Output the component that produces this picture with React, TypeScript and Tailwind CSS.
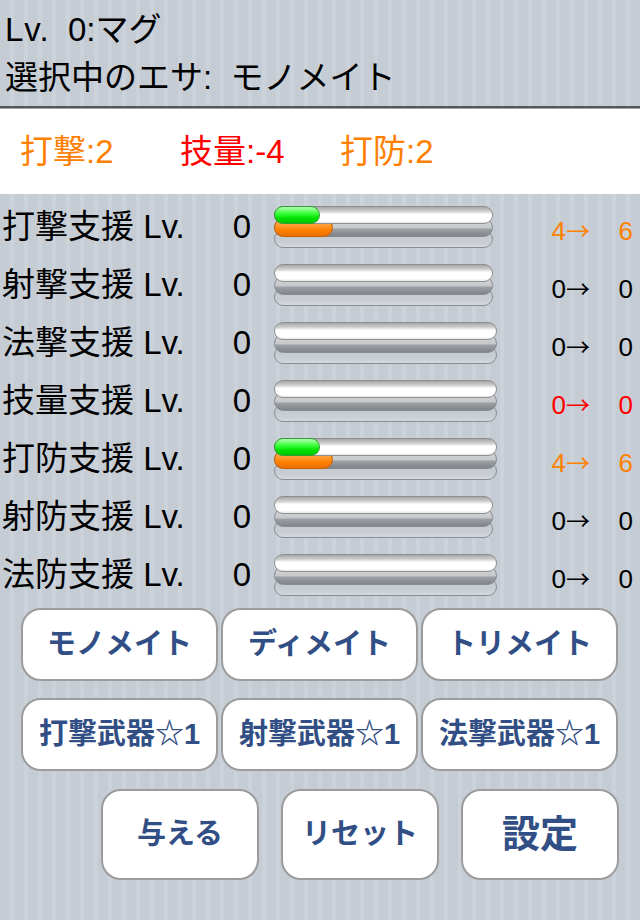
import React from 'react';

type Row = {
  label: string;
  from: number;
  to: number;
  tone: 'orange' | 'red' | 'black';
  fill: boolean;
  wide: boolean;
};

const ROWS: Row[] = [
  { label: '打撃支援', from: 4, to: 6, tone: 'orange', fill: true, wide: false },
  { label: '射撃支援', from: 0, to: 0, tone: 'black', fill: false, wide: false },
  { label: '法撃支援', from: 0, to: 0, tone: 'black', fill: false, wide: true },
  { label: '技量支援', from: 0, to: 0, tone: 'red', fill: false, wide: true },
  { label: '打防支援', from: 4, to: 6, tone: 'orange', fill: true, wide: true },
  { label: '射防支援', from: 0, to: 0, tone: 'black', fill: false, wide: false },
  { label: '法防支援', from: 0, to: 0, tone: 'black', fill: false, wide: true },
];

const TONE: Record<Row['tone'], string> = {
  orange: 'text-[#ff8000]',
  red: 'text-[#ff0000]',
  black: 'text-black',
};

// three stacked pill tracks, like the old iOS progress views
function StackBar({ fill, wide }: { fill: boolean; wide: boolean }) {
  return (
    <div className={`relative h-[42px] ${wide ? 'w-[223px]' : 'w-[219px]'}`}>
      {/* bottom track */}
      <div className="absolute left-0 right-0 top-[24px] h-[18px] rounded-full border border-[#8a8f95] bg-[linear-gradient(to_bottom,#c3c8ce_0%,#c9ced4_70%,#d4d8dd_100%)]" />
      {/* middle track */}
      <div className="absolute left-0 right-0 top-[12px] h-[19px] rounded-full border border-[#878b90] bg-[linear-gradient(to_bottom,#d8d8d8_0%,#c6c9cc_50%,#9a9ea2_62%,#80858a_100%)]" />
      {fill && (
        <div className="absolute left-0 top-[12px] h-[19px] w-[59px] rounded-full border border-[#c65f00] bg-[linear-gradient(to_bottom,#ffb565_0%,#ff9424_45%,#ff8000_65%,#e96f00_100%)]" />
      )}
      {/* top track */}
      <div className="absolute left-0 right-0 top-0 h-[18px] rounded-full border border-[#8f8f8f] bg-[linear-gradient(to_bottom,#a6a6a6_0%,#d2d2d2_28%,#ffffff_45%,#ffffff_85%,#e8e8e8_100%)]" />
      {fill && (
        <div className="absolute left-0 top-0 h-[18px] w-[46px] rounded-full border border-[#2f9f2f] bg-[linear-gradient(to_bottom,#b4ffb4_0%,#3cff3c_40%,#00e000_70%,#00c400_100%)]" />
      )}
    </div>
  );
}

function Btn({ children, big }: { children: React.ReactNode; big?: boolean }) {
  return (
    <button
      className={`flex items-center justify-center rounded-[20px] border-2 border-[#9c9c9c] bg-white font-bold text-[#324f85] ${
        big ? 'h-[91px] w-[158px] text-[29px]' : 'h-[73px] w-[197px] text-[29px]'
      }`}
    >
      {children}
    </button>
  );
}

export default function App() {
  return (
    <div className="h-[920px] w-full overflow-hidden bg-[repeating-linear-gradient(90deg,#c5ccd4_0px,#c5ccd4_10px,#cbd2d9_10px,#cbd2d9_14px)] font-['Liberation_Sans','Noto_Sans_CJK_JP',sans-serif] text-black">
      {/* Header */}
      <div className="h-[106px] pl-[5px] pt-[6px] text-[33px] leading-[48px]">
        <div className="whitespace-pre">
          <span className="tracking-[1px]">Lv.</span>  0:マグ
        </div>
        <div className="whitespace-pre">選択中のエサ:  モノメイト</div>
      </div>
      <div className="h-[2px] bg-[#565656]" />
      <div className="h-px bg-[#a3a3a3]" />

      {/* Stat changes */}
      <div className="flex h-[85px] items-center bg-white pl-[20px] text-[33px]">
        <span className="w-[160px] text-[#ff8000]">打撃:2</span>
        <span className="w-[160px] text-[#ff0000]">技量:-4</span>
        <span className="w-[160px] text-[#ff8000]">打防:2</span>
      </div>

      {/* Support levels */}
      <div className="mt-[4px]">
        {ROWS.map(r => (
          <div key={r.label} className="flex h-[58px] items-center">
            <div className="w-[202px] whitespace-pre pl-[2px] text-[33px] leading-[58px]">{r.label} Lv.</div>
            <div className="w-[49px] text-right text-[33px] leading-[58px]">0</div>
            <div className="ml-[23px]">
              <StackBar fill={r.fill} wide={r.wide} />
            </div>
            <div className={`mt-[6px] flex flex-1 items-baseline justify-end pr-[7px] text-[26px] leading-[58px] ${TONE[r.tone]}`}>
              <span>{r.from}</span>
              <span className="font-['Noto_Sans_CJK_JP',sans-serif] text-[24px]">→</span>
              <span className="w-[43px] text-right">{r.to}</span>
            </div>
          </div>
        ))}
      </div>

      {/* Food buttons */}
      <div className="mt-[4px] flex gap-[3px] pl-[21px]">
        <Btn>モノメイト</Btn>
        <Btn>ディメイト</Btn>
        <Btn>トリメイト</Btn>
      </div>
      <div className="mt-[17px] flex gap-[3px] pl-[21px]">
        <Btn>打撃武器☆1</Btn>
        <Btn>射撃武器☆1</Btn>
        <Btn>法撃武器☆1</Btn>
      </div>

      {/* Actions */}
      <div className="mt-[18px] flex gap-[22px] pl-[101px]">
        <Btn big>与える</Btn>
        <Btn big>リセット</Btn>
        <Btn big>
          <span className="text-[38px]">設定</span>
        </Btn>
      </div>
    </div>
  );
}
